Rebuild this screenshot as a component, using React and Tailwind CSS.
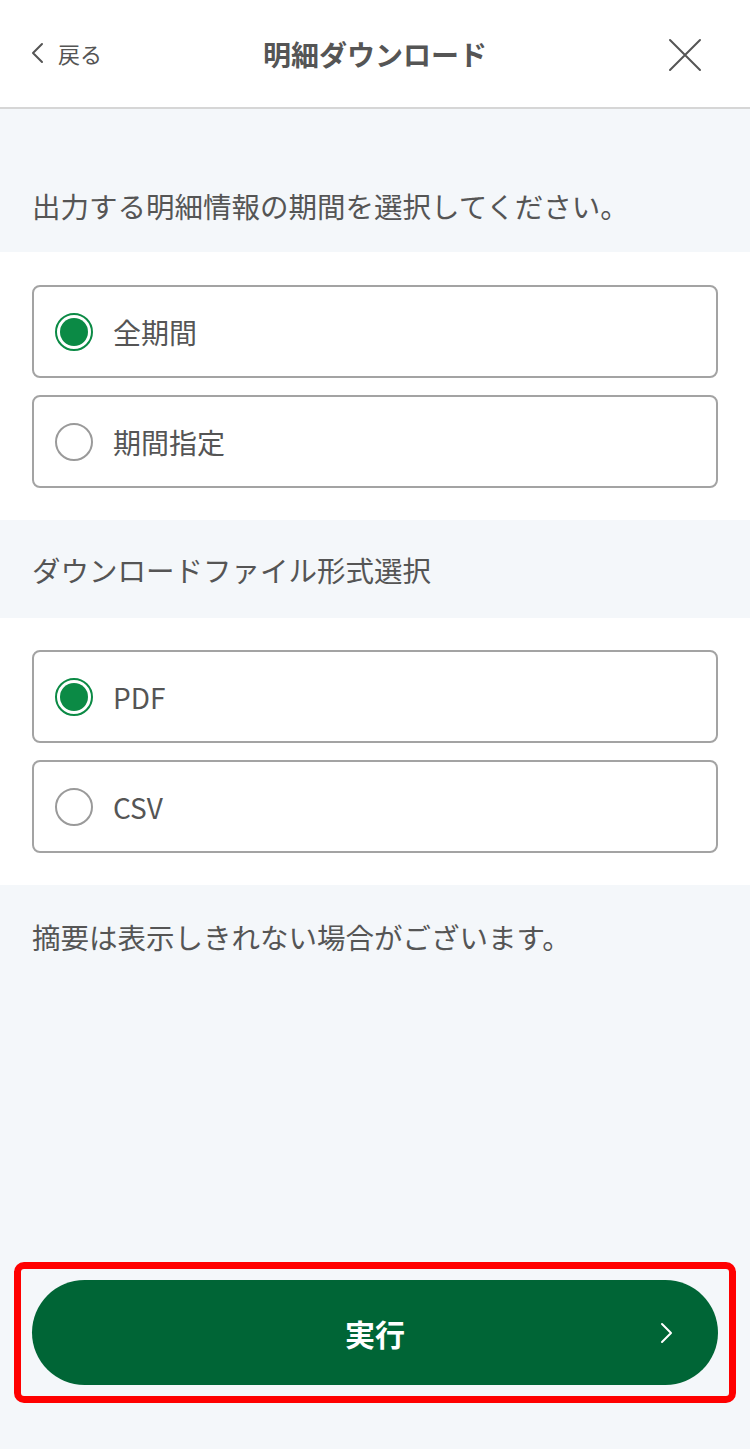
import React from "react";

const font = { fontFamily: '"Noto Sans CJK JP", "Noto Sans", sans-serif' };

function Radio({ checked }) {
  if (checked) {
    return (
      <span className="flex h-[38px] w-[38px] shrink-0 items-center justify-center rounded-full border-2 border-[#0b8a45] bg-white">
        <span className="h-[28px] w-[28px] rounded-full bg-[#0b8a45]" />
      </span>
    );
  }
  return <span className="h-[38px] w-[38px] shrink-0 rounded-full border-2 border-[#9a9a9a] bg-white" />;
}

function Option({ label, checked }) {
  return (
    <div className="flex h-[93px] items-center gap-[20px] rounded-[8px] border-2 border-[#a3a3a3] bg-white pl-[21px]">
      <Radio checked={checked} />
      <span className="text-[28px] leading-[40px] text-[#555]">{label}</span>
    </div>
  );
}

export default function App() {
  return (
    <div className="flex min-h-[1449px] flex-col bg-[#f4f7fa]" style={font}>
      <header className="relative flex h-[109px] items-center justify-center border-b-2 border-[#d6d6d6] bg-white">
        <div className="absolute left-[28px] top-[38px] flex items-center gap-[12px]">
          <svg width="18" height="24" viewBox="0 0 18 24" fill="none">
            <path d="M14 3 L5 12 L14 21" stroke="#555" strokeWidth="2" strokeLinecap="round" strokeLinejoin="round" />
          </svg>
          <span className="text-[22px] leading-[30px] text-[#555]">戻る</span>
        </div>
        <h1 className="text-[28px] font-bold leading-[40px] text-[#555]">明細ダウンロード</h1>
        <svg className="absolute left-[668px] top-[38px]" width="34" height="34" viewBox="0 0 34 34" fill="none">
          <path d="M2 2 L32 32 M32 2 L2 32" stroke="#555" strokeWidth="2" strokeLinecap="round" />
        </svg>
      </header>

      <div className="px-[32px] pb-[26px] pt-[77px]">
        <p className="text-[28.5px] leading-[40px] text-[#555]">出力する明細情報の期間を選択してください。</p>
      </div>

      <div className="flex flex-col gap-[17px] bg-white px-[32px] pb-[32px] pt-[33px]">
        <Option label="全期間" checked />
        <Option label="期間指定" />
      </div>

      <div className="px-[32px] pb-[28px] pt-[30px]">
        <p className="text-[28.5px] leading-[40px] text-[#555]">ダウンロードファイル形式選択</p>
      </div>

      <div className="flex flex-col gap-[17px] bg-white px-[32px] pb-[32px] pt-[32px]">
        <Option label="PDF" checked />
        <Option label="CSV" />
      </div>

      <div className="px-[32px] pt-[32px]">
        <p className="text-[28.5px] leading-[40px] text-[#555]">摘要は表示しきれない場合がございます。</p>
      </div>

      <div className="flex-1" />

      <div className="mx-[14px] mb-[46px] rounded-[10px] border-[7px] border-[#ff0000] px-[11px] py-[11px]">
        <button className="relative flex h-[105px] w-full items-center justify-center rounded-full bg-[#006536]">
          <span className="text-[30px] font-bold leading-[40px] text-white">実行</span>
          <svg className="absolute right-[44px] top-[42px]" width="14" height="22" viewBox="0 0 14 22" fill="none">
            <path d="M2 2 L11 11 L2 20" stroke="#fff" strokeWidth="2" strokeLinecap="round" strokeLinejoin="round" />
          </svg>
        </button>
      </div>
    </div>
  );
}
